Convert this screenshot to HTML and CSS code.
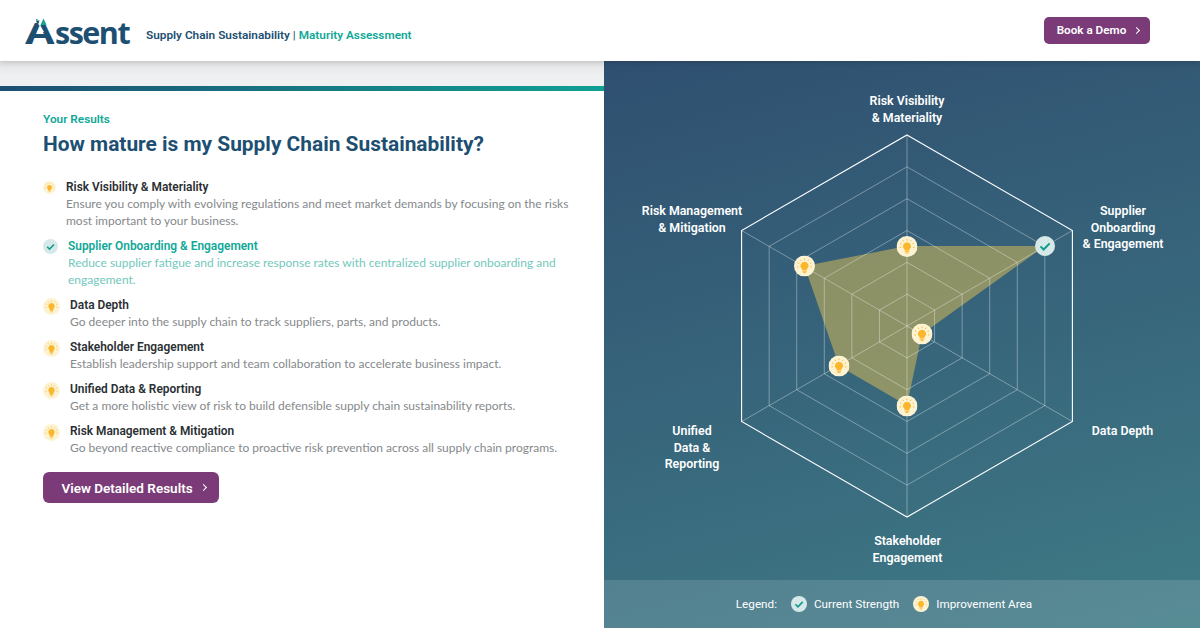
FILE: index.html
```html
<!DOCTYPE html>
<html lang="en">
<head>
<meta charset="UTF-8">
<meta name="viewport" content="width=device-width, initial-scale=1.0">
<title>Supply Chain Sustainability Maturity Assessment</title>
<link rel="stylesheet" href="styles.css">
</head>
<body>
<svg class="defs" width="0" height="0" aria-hidden="true">
  <symbol id="bulb" viewBox="0 0 24 24">
    <circle cx="12" cy="12" r="12" fill="#fdf3d3"/>
    <path d="M12 7.200a4.600 4.600 0 0 0-2.700 8.300v1.300h5.400v-1.300A4.600 4.600 0 0 0 12 7.200z" fill="#fbb72c"/>
    <rect x="9.500" y="17.300" width="5" height="1.200" fill="#fbb72c"/>
    <rect x="10.400" y="19" width="3.200" height="1.100" fill="#fbb72c"/>
    <path d="M12 3.400v2M7.200 4.700l1 1.600M16.800 4.700l-1 1.600M4 8.300l1.700 1M20 8.300l-1.700 1M3.400 13h1.800M20.600 13h-1.800" stroke="#fbb72c" stroke-width="1" fill="none"/>
  </symbol>
  <symbol id="check" viewBox="0 0 24 24">
    <circle cx="12" cy="12" r="12" fill="#d6e9e8"/>
    <path d="M6.600 12.400l3.800 3.800 7.200-7.400" stroke="#0f9c8c" stroke-width="2.400" fill="none"/>
  </symbol>
</svg>

<header class="topbar">
  <div class="logo">
    <span class="logo-word"><span class="logo-a">A</span>ssent</span>
    <svg class="logo-peaks" viewBox="0 0 30 20" aria-hidden="true">
      <path d="M9 0h12v7h-3l-3 3-3-3H9z" fill="#fff"/>
      <path d="M15.500 10l-3.500 6h7z" fill="#fff"/>
      <path d="M18.500 2.500l3 6.500h-6z" fill="#12a594"/>
      <path d="M11 4.500h3.500l-1.700 5z" fill="#1d4f72"/>
      <rect x="11" y="3" width="1.500" height="1.300" fill="#12a594"/>
    </svg>
  </div>
  <p class="tagline">Supply Chain Sustainability <span class="tagline-sep">|</span> <span class="tagline-accent">Maturity Assessment</span></p>
  <a class="btn btn-small" href="#">Book a Demo <span class="chevron"></span></a>
</header>

<main class="page">
  <section class="results">
    <div class="results-band"></div>
    <div class="results-bar"></div>
    <div class="results-body">
      <p class="eyebrow">Your Results</p>
      <h1>How mature is my Supply Chain Sustainability?</h1>
      <ul class="areas">
        <li class="area">
          <svg class="area-icon icon-sm"><use href="#bulb"/></svg>
          <div>
            <h2>Risk Visibility &amp; Materiality</h2>
            <p>Ensure you comply with evolving regulations and meet market demands by focusing on the risks most important to your business.</p>
          </div>
        </li>
        <li class="area area-strength">
          <svg class="area-icon icon-md"><use href="#check"/></svg>
          <div>
            <h2>Supplier Onboarding &amp; Engagement</h2>
            <p>Reduce supplier fatigue and increase response rates with centralized supplier onboarding and engagement.</p>
          </div>
        </li>
        <li class="area">
          <svg class="area-icon icon-lg"><use href="#bulb"/></svg>
          <div>
            <h2>Data Depth</h2>
            <p>Go deeper into the supply chain to track suppliers, parts, and products.</p>
          </div>
        </li>
        <li class="area">
          <svg class="area-icon icon-lg"><use href="#bulb"/></svg>
          <div>
            <h2>Stakeholder Engagement</h2>
            <p>Establish leadership support and team collaboration to accelerate business impact.</p>
          </div>
        </li>
        <li class="area">
          <svg class="area-icon icon-lg"><use href="#bulb"/></svg>
          <div>
            <h2>Unified Data &amp; Reporting</h2>
            <p>Get a more holistic view of risk to build defensible supply chain sustainability reports.</p>
          </div>
        </li>
        <li class="area">
          <svg class="area-icon icon-lg"><use href="#bulb"/></svg>
          <div>
            <h2>Risk Management &amp; Mitigation</h2>
            <p>Go beyond reactive compliance to proactive risk prevention across all supply chain programs.</p>
          </div>
        </li>
      </ul>
      <a class="btn btn-large" href="#">View Detailed Results <span class="chevron"></span></a>
    </div>
  </section>

  <section class="chart-panel">
    <svg class="radar" viewBox="0 0 596 519" role="img" aria-label="Radar chart of maturity by area">
      <g transform="translate(303 265)">
        <polygon class="area-shape" points="0,-80 138,-80 15,8 0,79.500 -68,40 -102.500,-60"/>
        <g class="spokes">
          <path d="M0 -191V191M-165.400 -95.500L165.400 95.500M-165.400 95.500L165.400 -95.500"/>
        </g>
        <g class="rings">
          <polygon points="0,-31.830 27.570,-15.920 27.570,15.920 0,31.830 -27.570,15.920 -27.570,-15.920"/>
          <polygon points="0,-63.660 55.140,-31.840 55.140,31.840 0,63.660 -55.140,31.840 -55.140,-31.840"/>
          <polygon points="0,-95.490 82.710,-47.760 82.710,47.760 0,95.490 -82.710,47.760 -82.710,-47.760"/>
          <polygon points="0,-127.320 110.280,-63.680 110.280,63.680 0,127.320 -110.280,63.680 -110.280,-63.680"/>
          <polygon points="0,-159.150 137.850,-79.600 137.850,79.600 0,159.150 -137.850,79.600 -137.850,-79.600"/>
        </g>
        <polygon class="ring-outer" points="0,-191 165.400,-95.500 165.400,95.500 0,191 -165.400,95.500 -165.400,-95.500"/>
        <use href="#bulb" x="-10.500" y="-90" width="21" height="21"/>
        <use href="#check" x="128" y="-90" width="20" height="20"/>
        <use href="#bulb" x="4.500" y="-2.500" width="21" height="21"/>
        <use href="#bulb" x="-10.500" y="69.500" width="21" height="21"/>
        <use href="#bulb" x="-78.500" y="29.500" width="21" height="21"/>
        <use href="#bulb" x="-113" y="-70.500" width="21" height="21"/>
      </g>
      <g class="labels">
        <text><tspan x="303" y="44">Risk Visibility</tspan><tspan x="303" y="61">&amp; Materiality</tspan></text>
        <text><tspan x="519" y="154">Supplier</tspan><tspan x="519" y="171">Onboarding</tspan><tspan x="519" y="187">&amp; Engagement</tspan></text>
        <text><tspan x="518.500" y="374">Data Depth</tspan></text>
        <text><tspan x="303.500" y="484">Stakeholder</tspan><tspan x="303.500" y="501">Engagement</tspan></text>
        <text><tspan x="88" y="374">Unified</tspan><tspan x="88" y="391">Data &amp;</tspan><tspan x="88" y="407">Reporting</tspan></text>
        <text><tspan x="88" y="154">Risk Management</tspan><tspan x="88" y="171">&amp; Mitigation</tspan></text>
      </g>
    </svg>
    <div class="legend">
      <span class="legend-title">Legend:</span>
      <span class="legend-item"><svg class="legend-icon"><use href="#check"/></svg>Current Strength</span>
      <span class="legend-item"><svg class="legend-icon"><use href="#bulb"/></svg>Improvement Area</span>
    </div>
  </section>
</main>
</body>
</html>
```

FILE: styles.css
```css
* {
  box-sizing: border-box;
}
html, body {
  height: 100%;
}
body {
  margin: 0;
  background-color: #fff;
  font-family: Roboto, Arial, sans-serif;
  overflow: hidden;
  display: flex;
  flex-direction: column;
}
.defs {
  position: absolute;
}

/* Header */
.topbar {
  height: 61px;
  flex-shrink: 0;
  display: flex;
  align-items: center;
  padding: 0 50px 0 25px;
  background-color: #fff;
  box-shadow: 0 1px 6px rgba(0, 0, 0, 0.18);
  position: relative;
  z-index: 2;
}
.logo {
  width: 121px;
  height: 36px;
  position: relative;
  line-height: 1;
}
.logo-word {
  font-family: "Open Sans", Arial, sans-serif;
  font-weight: 700;
  font-size: 30.500px;
  letter-spacing: -1.500px;
  color: #1d4f72;
  display: block;
  white-space: nowrap;
  margin-top: 2px;
}
.logo-a {
  display: inline-block;
  width: 30px;
  font-size: 33px;
  transform: scaleX(1.3);
  transform-origin: left bottom;
}
.logo-peaks {
  position: absolute;
  left: 0;
  top: 3px;
  width: 30px;
  height: 20px;
}
.tagline {
  margin: 9px 0 0;
  font-size: 11.800px;
  font-weight: 600;
  color: #1d4f72;
  flex: 1;
}
.tagline-sep {
  font-weight: 400;
}
.tagline-accent {
  color: #0fa898;
}
.btn {
  display: inline-flex;
  align-items: center;
  justify-content: center;
  background-color: #7a3b78;
  color: #fff;
  font-weight: 600;
  text-decoration: none;
}
.btn-small {
  width: 106px;
  height: 27px;
  margin-top: -1px;
  padding-left: 2px;
  font-size: 11.700px;
  border-radius: 5px;
  gap: 8px;
}
.btn-large {
  width: 176px;
  height: 31px;
  margin-top: 7px;
  padding-left: 5px;
  font-size: 13.500px;
  border-radius: 6px;
  gap: 8px;
}
.chevron {
  width: 5px;
  height: 5px;
  border-top: 1.500px solid #fff;
  border-right: 1.500px solid #fff;
  transform: rotate(45deg);
}

/* Layout */
.page {
  flex: 1;
  display: flex;
  min-height: 0;
}

/* Left column */
.results {
  width: 604px;
  flex-shrink: 0;
}
.results-band {
  height: 25px;
  background: linear-gradient(180deg, #e2e4e6, #eef0f1 60%);
}
.results-bar {
  height: 5px;
  background: linear-gradient(90deg, #1d4f72, #0fa093);
}
.results-body {
  padding: 20px 30px 0 43px;
}
.eyebrow {
  margin: 0;
  font-size: 11.800px;
  font-weight: 600;
  line-height: 16px;
  color: #0fa898;
}
h1 {
  margin: 2px 0 0;
  font-size: 20.900px;
  font-weight: 700;
  line-height: 30px;
  color: #1d4f72;
}
.areas {
  list-style: none;
  margin: 20px 0 0;
  padding: 0;
}
.area {
  display: flex;
  gap: 10px;
  margin-bottom: 9px;
}
.area h2 {
  margin: 0;
  font-size: 11.900px;
  font-weight: 600;
  line-height: 17px;
  color: #2a2f33;
}
.area p {
  margin: -1px 0 0;
  font-family: Lato, Arial, sans-serif;
  font-size: 12px;
  line-height: 17px;
  color: #85898c;
}
.area-strength h2 {
  color: #0fa898;
}
.area-strength p {
  color: #73c8bd;
}
.area-icon {
  flex-shrink: 0;
  margin-top: 1px;
}
.icon-sm {
  width: 13px;
  height: 13px;
  margin-top: 2px;
}
.icon-md {
  width: 15px;
  height: 15px;
}
.icon-lg {
  width: 17px;
  height: 17px;
}

/* Right column */
.chart-panel {
  flex: 1;
  display: flex;
  flex-direction: column;
  background: linear-gradient(165deg, #2f4f70, #3f7b86);
}
.radar {
  width: 596px;
  height: 519px;
  display: block;
}
.rings polygon, .spokes path {
  fill: none;
  stroke: rgba(255, 255, 255, 0.35);
  stroke-width: 1;
}
.ring-outer {
  fill: none;
  stroke: #fff;
  stroke-width: 1.100;
}
.area-shape {
  fill: rgba(228, 194, 84, 0.5);
}
.labels text {
  fill: #fff;
  font-size: 12.400px;
  font-weight: 600;
  text-anchor: middle;
}
.legend {
  flex: 1;
  display: flex;
  align-items: center;
  justify-content: center;
  gap: 14px;
  padding-right: 36px;
  background-color: rgba(255, 255, 255, 0.13);
  color: #fff;
  font-size: 11.700px;
}
.legend-item {
  display: flex;
  align-items: center;
  gap: 7px;
}
.legend-icon {
  width: 16px;
  height: 16px;
}
```
